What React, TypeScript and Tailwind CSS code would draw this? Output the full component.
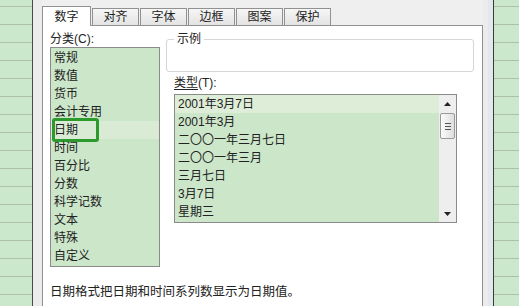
import React from 'react';

const categorias = ['常规', '数值', '货币', '会计专用', '日期', '时间', '百分比', '分数', '科学记数', '文本', '特殊', '自定义'];
const tipos = ['2001年3月7日', '2001年3月', '二〇〇一年三月七日', '二〇〇一年三月', '三月七日', '3月7日', '星期三'];
const pestanas = ['对齐', '字体', '边框', '图案', '保护'];

function SheetStrip({ className }: { className?: string }) {
  return (
    <div className={`h-full bg-[#cce8cc] ${className ?? ''}`}>
      <div className="h-[7px] border-b border-[#adc0ab]" />
      {Array.from({ length: 17 }).map((_, i) => (
        <div key={i} className="h-[18px] border-b border-[#adc0ab]" />
      ))}
    </div>
  );
}

function Arrow({ down }: { down?: boolean }) {
  return (
    <svg width="7" height="4" viewBox="0 0 7 4" className={down ? 'rotate-180' : ''}>
      <path d="M0 4L3.5 0L7 4Z" fill="#222" />
    </svg>
  );
}

export default function App() {
  return (
    <div className="flex w-[519px] h-[306px] overflow-hidden bg-[#efefef] text-[12px] text-[#222] font-[family-name:'Liberation_Sans','Noto_Sans_CJK_SC',sans-serif]">
      <SheetStrip className="w-[33px] border-r border-[#4a4a4a]" />
      <div className="w-[9px] bg-[#ececec]" />

      {/* dialog */}
      <div className="w-[441px] flex flex-col">
        <div className="h-[25px] flex items-end">
          <div className="relative z-10 -mb-px h-[20px] w-[49px] bg-white border border-b-0 border-[#919191] flex items-center justify-center">
            数字
          </div>
          {pestanas.map((p) => (
            <div
              key={p}
              className="ml-px h-[17px] w-[47px] bg-gradient-to-b from-[#f6f6f6] to-[#e3e3e3] border border-b-0 border-[#919191] flex items-center justify-center"
            >
              {p}
            </div>
          ))}
        </div>

        <div className="flex-1 bg-white border-x border-t border-[#919191] px-[7px] pt-[5px]">
          <div className="flex">
            <div className="w-[110px]">
              <div className="h-[16px] leading-[16px]">分类(C):</div>
              <div className="h-[220px] border border-[#8a8a8a] bg-[#cce6ca] pt-px">
                {categorias.map((c) => (
                  <div
                    key={c}
                    className={`relative h-[18px] leading-[18px] pl-[3px] ${c === '日期' ? 'bg-[#d9ebd4]' : ''}`}
                  >
                    {c}
                    {c === '日期' && (
                      <span className="absolute -top-[3px] left-px w-[47px] h-[24px] border-[3px] border-[#2c9a2c] rounded-[3px]" />
                    )}
                  </div>
                ))}
              </div>
            </div>

            <div className="ml-[6px] w-[308px]">
              <fieldset className="h-[41px] border border-[#d6d6d6] rounded-[3px]">
                <legend className="ml-[7px] px-[3px] leading-[16px]">示例</legend>
              </fieldset>
              <div className="ml-[8px] mt-[3px] h-[16px] leading-[16px]">
                <span className="underline underline-offset-2">类型</span>(T):
              </div>
              <div className="ml-[8px] mt-[3px] w-[283px] h-[129px] border border-[#8a8a8a] flex">
                <div className="flex-1 bg-[#cce6ca]">
                  {tipos.map((t, i) => (
                    <div key={t} className={`h-[18px] leading-[18px] pl-[3px] ${i === 0 ? 'bg-[#deedd7]' : ''}`}>
                      {t}
                    </div>
                  ))}
                </div>
                <div className="w-[17px] bg-[#eeeeee] flex flex-col">
                  <div className="h-[17px] flex items-center justify-center">
                    <Arrow />
                  </div>
                  <div className="mx-px mt-px h-[26px] rounded-[2px] border border-[#9a9a9a] bg-gradient-to-r from-[#fbfbfb] to-[#dedede] flex flex-col items-center justify-center gap-[2px]">
                    <span className="w-[6px] h-px bg-[#555]" />
                    <span className="w-[6px] h-px bg-[#555]" />
                    <span className="w-[6px] h-px bg-[#555]" />
                  </div>
                  <div className="flex-1" />
                  <div className="h-[17px] flex items-center justify-center">
                    <Arrow down />
                  </div>
                </div>
              </div>
            </div>
          </div>

          <div className="mt-[17px] h-[16px] leading-[16px] text-[12.5px]">日期格式把日期和时间系列数显示为日期值。</div>
        </div>
      </div>

      <div className="w-[10px] flex">
        <div className="w-[5px] bg-[#ececec]" />
        <div className="w-[5px] bg-[#e3e8ee]" />
      </div>
      <SheetStrip className="w-[26px] border-l border-[#3a3a3a]" />
    </div>
  );
}
